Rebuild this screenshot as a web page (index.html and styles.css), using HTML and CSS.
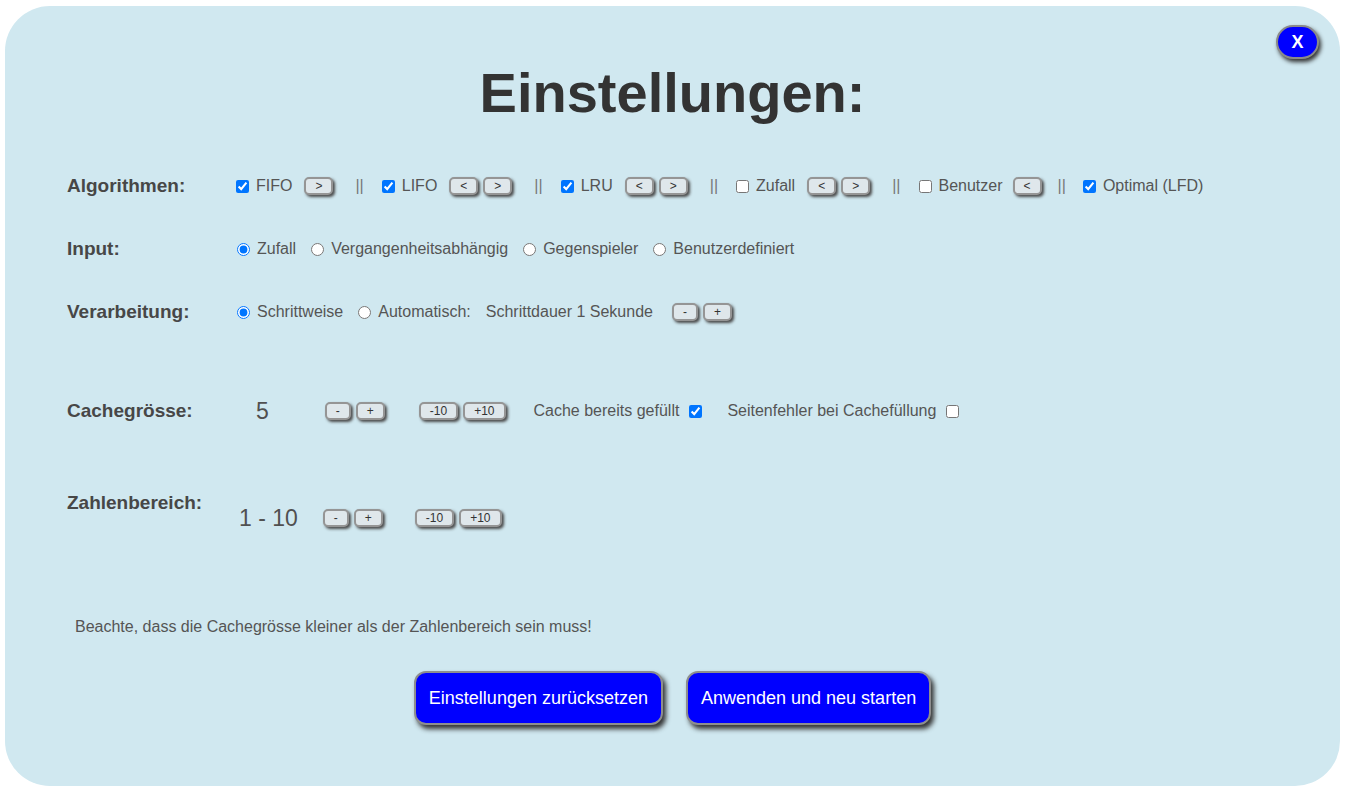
FILE: index.html
```html
<!DOCTYPE html>
<html lang="de">
<head>
<meta charset="utf-8">
<title>Einstellungen</title>
<link rel="stylesheet" href="styles.css">
</head>
<body>
<div class="modal">
  <button class="close">X</button>
  <h1 class="title">Einstellungen:</h1>

  <div class="row r-alg">
    <div class="label">Algorithmen:</div>
    <div class="content">
      <label class="opt"><input type="checkbox" checked><span>FIFO</span></label>
      <span class="btns"><button class="sb">&gt;</button></span>
      <span class="sep">||</span>
      <label class="opt"><input type="checkbox" checked><span>LIFO</span></label>
      <span class="btns"><button class="sb">&lt;</button><button class="sb">&gt;</button></span>
      <span class="sep">||</span>
      <label class="opt"><input type="checkbox" checked><span>LRU</span></label>
      <span class="btns"><button class="sb">&lt;</button><button class="sb">&gt;</button></span>
      <span class="sep">||</span>
      <label class="opt"><input type="checkbox"><span>Zufall</span></label>
      <span class="btns"><button class="sb">&lt;</button><button class="sb">&gt;</button></span>
      <span class="sep">||</span>
      <label class="opt"><input type="checkbox"><span>Benutzer</span></label>
      <span class="btns b-benutzer"><button class="sb">&lt;</button></span>
      <span class="sep sep-last">||</span>
      <label class="opt"><input type="checkbox" checked><span>Optimal (LFD)</span></label>
    </div>
  </div>

  <div class="row r-input">
    <div class="label">Input:</div>
    <div class="content">
      <label class="opt radio"><input type="radio" name="inp" checked><span>Zufall</span></label>
      <label class="opt radio"><input type="radio" name="inp"><span>Vergangenheitsabhängig</span></label>
      <label class="opt radio"><input type="radio" name="inp"><span>Gegenspieler</span></label>
      <label class="opt radio"><input type="radio" name="inp"><span>Benutzerdefiniert</span></label>
    </div>
  </div>

  <div class="row r-verarb">
    <div class="label">Verarbeitung:</div>
    <div class="content">
      <label class="opt radio"><input type="radio" name="ver" checked><span>Schrittweise</span></label>
      <label class="opt radio"><input type="radio" name="ver"><span>Automatisch:</span></label>
      <span class="dauer">Schrittdauer 1 Sekunde</span>
      <span class="btns b-dauer"><button class="sb">-</button><button class="sb">+</button></span>
    </div>
  </div>

  <div class="row r-cache">
    <div class="label">Cachegrösse:</div>
    <div class="content">
      <span class="num num-cache">5</span>
      <span class="btns b-one"><button class="sb">-</button><button class="sb">+</button></span>
      <span class="btns b-ten"><button class="sb">-10</button><button class="sb">+10</button></span>
      <label class="chk-right c-gefuellt"><span>Cache bereits gefüllt</span><input type="checkbox" checked></label>
      <label class="chk-right c-fehler"><span>Seitenfehler bei Cachefüllung</span><input type="checkbox"></label>
    </div>
  </div>

  <div class="row r-zahl">
    <div class="label">Zahlenbereich:</div>
    <div class="content">
      <span class="num num-range">1 - 10</span>
      <span class="btns z-one"><button class="sb">-</button><button class="sb">+</button></span>
      <span class="btns z-ten"><button class="sb">-10</button><button class="sb">+10</button></span>
    </div>
  </div>

  <p class="note">Beachte, dass die Cachegrösse kleiner als der Zahlenbereich sein muss!</p>

  <div class="actions">
    <button class="big">Einstellungen zurücksetzen</button>
    <button class="big">Anwenden und neu starten</button>
  </div>
</div>
</body>
</html>
```

FILE: styles.css
```css
html, body {
  margin: 0;
  padding: 0;
  background: #ffffff;
}

body {
  font-family: "Liberation Sans", Arial, sans-serif;
}

.modal {
  position: relative;
  box-sizing: border-box;
  width: 1335px;
  height: 780px;
  margin: 6px 0 0 5px;
  background: #d0e8f0;
  border-radius: 45px;
  overflow: hidden;
}

.close {
  position: absolute;
  top: 19px;
  right: 21px;
  width: 43px;
  height: 34px;
  box-sizing: border-box;
  border: 2px solid #8a8a8a;
  border-radius: 17px;
  background: #0000ff;
  color: #ffffff;
  font-family: "Liberation Sans", Arial, sans-serif;
  font-weight: bold;
  font-size: 18px;
  line-height: 28px;
  padding: 0;
  box-shadow: 2px 3px 4px #333333;
}

.title {
  margin: 55px 0 0;
  height: 64px;
  line-height: 64px;
  font-size: 56px;
  font-weight: bold;
  text-align: center;
  color: #333333;
}

.row {
  display: flex;
  align-items: center;
  height: 30px;
  padding-left: 62px;
}

.label {
  flex: 0 0 169px;
  font-size: 19px;
  font-weight: bold;
  color: #474747;
  line-height: 30px;
}

.content {
  display: flex;
  align-items: center;
  font-size: 16px;
  color: #555555;
  line-height: 30px;
}

.r-alg { margin-top: 46px; }
.r-input { margin-top: 33px; }
.r-verarb { margin-top: 33px; }
.r-cache { margin-top: 69px; }
.r-zahl { margin-top: 62px; align-items: flex-start; }
.r-zahl .content { margin-top: 15px; }

.opt {
  display: flex;
  align-items: center;
}

.opt input {
  margin: 0 7px 0 0;
  width: 13px;
  height: 13px;
}

.radio { margin-right: 14px; }
.radio input { margin-left: 1px; margin-right: 7px; }

.btns {
  display: flex;
  gap: 5px;
  margin-left: 12px;
}

.sb {
  box-sizing: border-box;
  height: 18px;
  padding: 0 9px;
  border: 2px solid #959595;
  border-radius: 5px;
  background: #dfe7eb;
  color: #333333;
  font-family: "Liberation Sans", Arial, sans-serif;
  font-size: 12px;
  line-height: 13px;
  box-shadow: 2px 2px 3px #4a4a4a;
}

.sep {
  margin: 0 18px 0 22px;
  color: #777777;
}

.b-benutzer { margin-left: 10px; }
.sep-last { margin: 0 17px 0 16px; }

.dauer { margin-left: 1px; }
.b-dauer { margin-left: 19px; }

.num {
  font-size: 23px;
  color: #505050;
}

.num-cache { margin-left: 20px; }
.b-one { margin-left: 56px; }
.b-ten { margin-left: 34px; }

.chk-right {
  display: flex;
  align-items: center;
}

.chk-right input {
  margin: 0 0 0 10px;
  width: 13px;
  height: 13px;
}

.c-gefuellt { margin-left: 28px; }
.c-fehler { margin-left: 25px; }

.num-range { margin-left: 3px; }
.z-one { margin-left: 25px; }
.z-ten { margin-left: 32px; }

.note {
  margin: 94px 0 0 70px;
  font-size: 16px;
  line-height: 30px;
  color: #555555;
}

.actions {
  display: flex;
  justify-content: center;
  gap: 23px;
  margin-top: 29px;
}

.big {
  box-sizing: border-box;
  height: 54px;
  padding: 0 13px;
  border: 2px solid #8e8e8e;
  border-radius: 12px;
  background: #0000ff;
  color: #ffffff;
  font-family: "Liberation Sans", Arial, sans-serif;
  font-size: 18px;
  font-weight: normal;
  box-shadow: 3px 4px 5px #333333;
}
```
